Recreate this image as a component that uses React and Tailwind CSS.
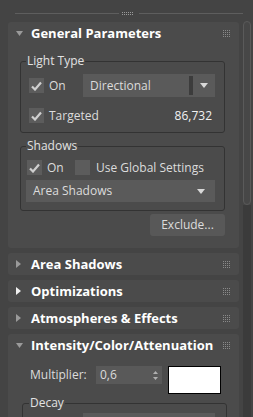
import React from 'react'

const font = { fontFamily: '"Open Sans", "Noto Sans", sans-serif' }

const Grip = () => (
  <div className="grid grid-cols-4 gap-[1px] w-[7px] h-[7px]">
    {Array.from({ length: 16 }).map((_, i) => (
      <div key={i} className="w-[1px] h-[1px] bg-[#8a8a8a]" />
    ))}
  </div>
)

const Caret = ({ open, bright }) =>
  open ? (
    <svg width="7" height="5" viewBox="0 0 7 5" className="shrink-0">
      <path d="M0 0 H7 L3.5 5 Z" fill="#9a9a9a" />
    </svg>
  ) : (
    <svg width="5" height="8" viewBox="0 0 5 8" className="shrink-0">
      <path d="M0 0 L5 4 L0 8 Z" fill={bright ? '#f0f0f0' : '#9a9a9a'} />
    </svg>
  )

const Rollout = ({ title, open, bright, children }) => (
  <div className="rounded-[3px] bg-[#4b4b4b] shrink-0">
    <div className="h-[22px] flex items-center pl-[8px] pr-[9px]">
      <div className="w-[15px] flex items-center">
        <Caret open={open} bright={bright} />
      </div>
      <span className="text-[13px] font-bold text-white leading-none tracking-[0px]">{title}</span>
      <div className="ml-auto">
        <Grip />
      </div>
    </div>
    {children}
  </div>
)

const Check = ({ checked }) => (
  <div className="w-[15px] h-[15px] bg-[#5c5c5c] flex items-center justify-center shrink-0">
    {checked && (
      <svg width="11" height="10" viewBox="0 0 11 10">
        <path d="M1 5.5 L4 8.5 L10 1.5" stroke="#cfcfcf" strokeWidth="2.2" fill="none" />
      </svg>
    )}
  </div>
)

const DownArrow = () => (
  <svg width="8" height="5" viewBox="0 0 8 5">
    <path d="M0 0 H8 L4 5 Z" fill="#d8d8d8" />
  </svg>
)

const Group = ({ label, className, legendClass, children }) => (
  <fieldset className={'border border-[#333333] rounded-[3px] ' + className}>
    <legend className={'px-[1px] text-[12px] leading-[12px] text-[#e2e2e2] ' + legendClass}>{label}</legend>
    {children}
  </fieldset>
)

export default function App() {
  return (
    <div className="w-[253px] h-[417px] overflow-hidden bg-[#444444] flex text-[12px] text-[#dcdcdc]" style={font}>
      <div className="w-[243px] pl-[8px] pr-[4px] flex flex-col">
        <div className="h-[22px] shrink-0 flex items-start pt-[12px] -mr-[4px] pl-[7px]">
          <div className="w-[104px] h-[1px] mt-[1px] bg-[#5e5e5e]" />
          <div className="ml-[3px] mr-[5px] w-[12px] grid grid-cols-6 gap-y-[1px]">
            {Array.from({ length: 12 }).map((_, i) => (
              <div key={i} className="w-[1px] h-[1px] bg-[#9a9a9a]" />
            ))}
          </div>
          <div className="w-[104px] h-[1px] mt-[1px] bg-[#5e5e5e]" />
        </div>

        <div className="flex flex-col gap-[5px]">
          <Rollout title="General Parameters" open>
            <Group label="Light Type" className="mt-[11px] ml-[12px] mr-[14px]" legendClass="ml-[5px]">
              <div className="pl-[8px] pr-[9px] pt-[7px] pb-[9px]">
                <div className="flex items-center h-[23px]">
                  <Check checked />
                  <span className="ml-[5px]">On</span>
                  <div className="ml-auto w-[132px] h-[23px] bg-[#5a5a5a] flex items-center pl-[7px]">
                    <span>Directional</span>
                    <div className="ml-auto w-[4px] h-[19px] bg-[#3c3c3c]" />
                    <div className="w-[22px] flex justify-center">
                      <DownArrow />
                    </div>
                  </div>
                </div>
                <div className="flex items-center h-[15px] mt-[11px]">
                  <Check checked />
                  <span className="ml-[5px]">Targeted</span>
                  <span className="ml-auto mr-[3px] text-[#f2f2f2]">86,732</span>
                </div>
              </div>
            </Group>

            <Group label="Shadows" className="mt-[7px] ml-[12px] mr-[14px]" legendClass="ml-[5px]">
              <div className="pl-[5px] pr-[9px] pt-[8px] pb-[8px]">
                <div className="flex items-center h-[15px]">
                  <div className="w-[48px] flex items-center ml-[1px]">
                    <Check checked />
                    <span className="ml-[5px]">On</span>
                  </div>
                  <Check />
                  <span className="ml-[6px]">Use Global Settings</span>
                </div>
                <div className="mt-[5px] h-[22px] bg-[#5a5a5a] flex items-center pl-[7px] pr-[10px]">
                  <span>Area Shadows</span>
                  <div className="ml-auto">
                    <DownArrow />
                  </div>
                </div>
              </div>
            </Group>

            <div className="flex justify-end mr-[14px] mt-[3px] pb-[12px]">
              <div className="w-[75px] h-[22px] rounded-[3px] bg-[#585858] flex items-center justify-center">
                Exclude...
              </div>
            </div>
          </Rollout>

          <Rollout title="Area Shadows" />
          <Rollout title="Optimizations" bright />
          <Rollout title="Atmospheres & Effects" />

          <Rollout title="Intensity/Color/Attenuation" open>
            <div className="flex items-start pl-[22px] mt-[10px]">
              <div className="w-[66px] h-[18px] flex items-center">Multiplier:</div>
              <div className="w-[66px] h-[18px] bg-[#595959] flex items-center pl-[4px] pr-[4px]">
                <span>0,6</span>
                <div className="ml-auto flex flex-col gap-[3px]">
                  <svg width="5" height="3" viewBox="0 0 5 3"><path d="M0 3 L2.5 0 L5 3 Z" fill="#b0b0b0" /></svg>
                  <svg width="5" height="3" viewBox="0 0 5 3"><path d="M0 0 H5 L2.5 3 Z" fill="#b0b0b0" /></svg>
                </div>
              </div>
              <div className="ml-[6px] w-[53px] h-[28px] bg-white border border-black" />
            </div>
            <Group label="Decay" className="mt-[3px] ml-[14px] mr-[12px] h-[40px]" legendClass="ml-[6px]">
              <div className="ml-[60px] mt-[4px] w-[132px] h-[20px] bg-[#5a5a5a]" />
            </Group>
          </Rollout>
        </div>
      </div>

      <div className="w-[8px] mt-[21px] flex flex-col">
        <div className="h-[184px] rounded-[4px] border border-[#5a5a5a] bg-[#474747]" />
        <div className="flex-1 bg-[#3b3b3b]" />
      </div>
    </div>
  )
}
